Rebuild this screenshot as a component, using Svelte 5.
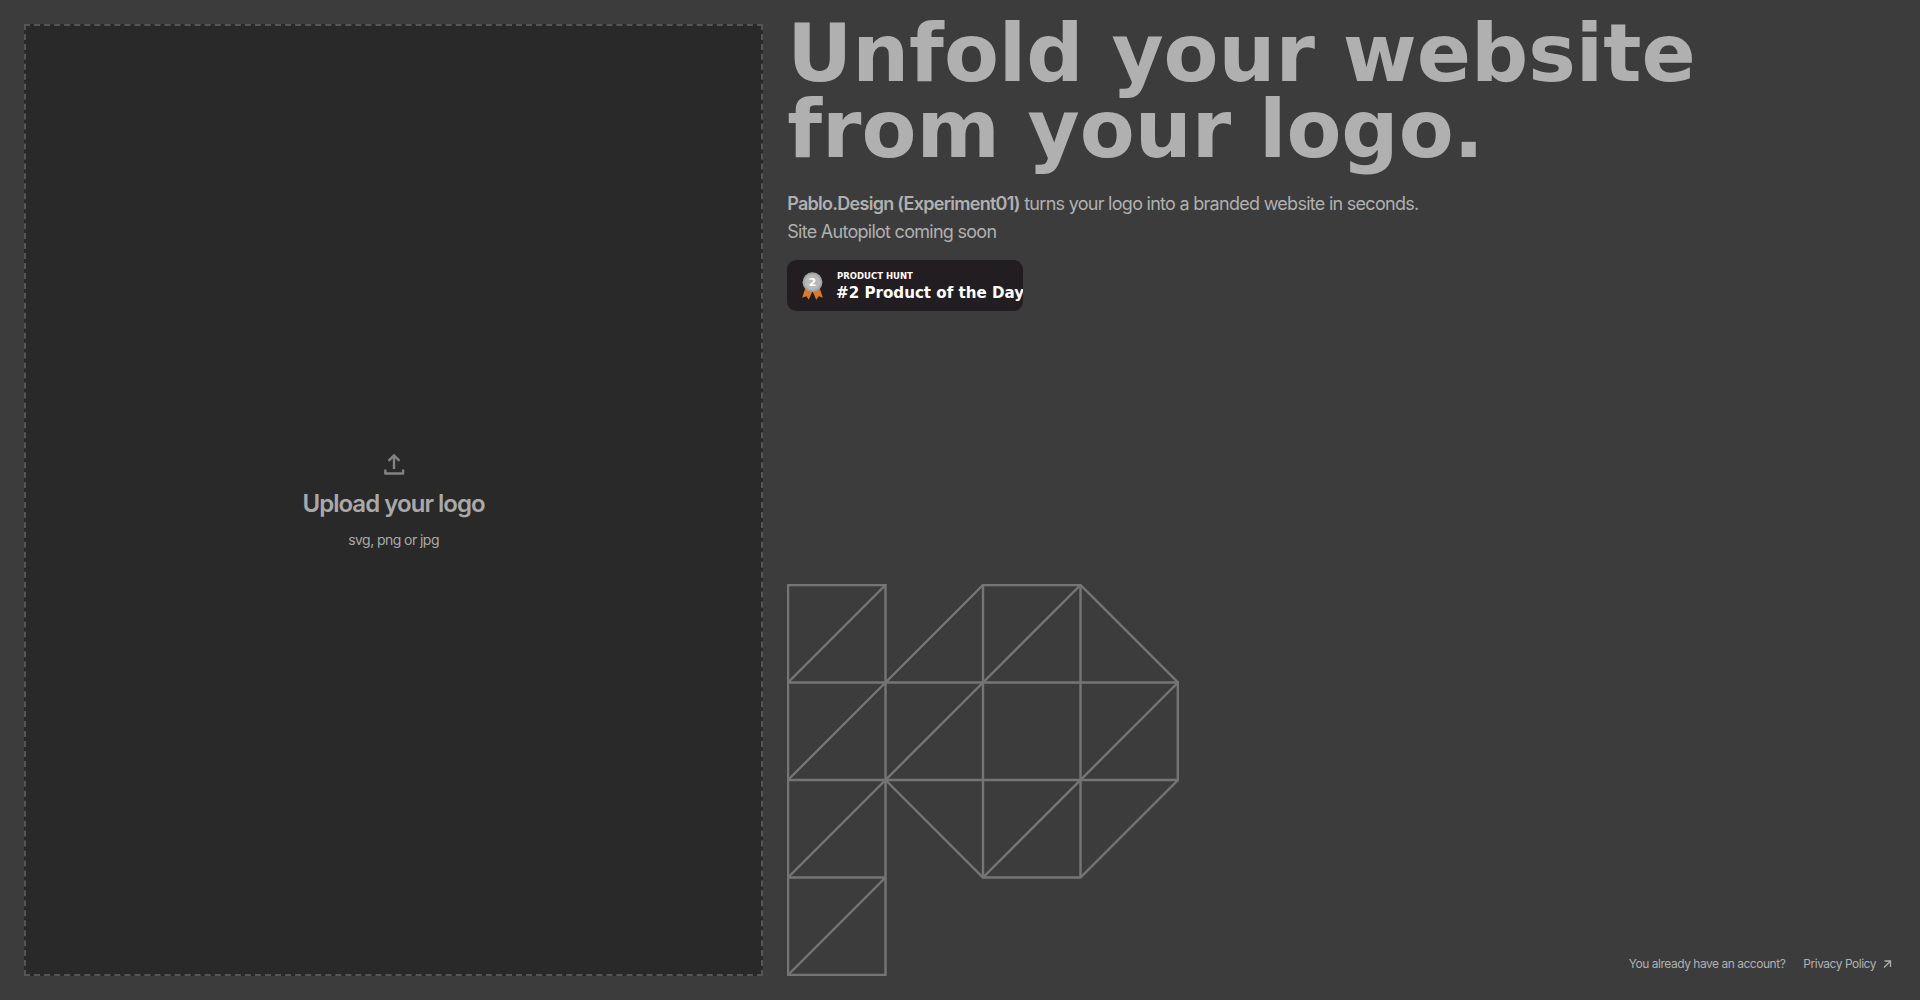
<script>
  const cells = [
    'M1 1H98.5V391H1Z',
    'M1 98.5H391V196H1',
    'M1 293.5H98.5',
    'M1 98.5L98.5 1M1 196L98.5 98.5M1 293.5L98.5 196M1 391L98.5 293.5',
    'M98.5 98.5L196 1H293.5L391 98.5V196L293.5 293.5H196L98.5 196',
    'M196 1V293.5M293.5 1V293.5',
    'M98.5 196L196 98.5L293.5 1M196 293.5L391 98.5',
  ];
</script>

<main class="page">
  <button class="upload" type="button">
    <svg class="upload-icon" viewBox="0 0 24 24" aria-hidden="true">
      <path d="M12 17V3.5M6.5 8.8L12 3.3L17.5 8.8M3.3 17.5V21.5H21.1V17.5" />
    </svg>
    <span class="upload-title">Upload your logo</span>
    <span class="upload-hint">svg, png or jpg</span>
  </button>

  <section class="intro">
    <header>
      <h1>Unfold your website<br />from your logo.</h1>
      <p class="lead">
        <strong>Pablo.Design (Experiment01)</strong> turns your logo into a branded website in seconds.<br />Site Autopilot coming soon
      </p>
      <a class="badge" href="#product-hunt" aria-label="#2 Product of the Day on Product Hunt">
        <svg viewBox="0 0 250 54">
          <rect width="250" height="54" rx="10" fill="#221d21" />
          <path d="M19 31L16 40L20.5 38.5L23 42L27 33Z M35 31L38 40L33.5 38.5L31 42L27 33Z" fill="#d9792b" />
          <circle cx="27" cy="23.5" r="10.5" fill="#a3a3a3" />
          <circle cx="27" cy="23.5" r="8.5" fill="#b8b8b8" />
          <text x="27" y="28" class="rank">2</text>
          <text x="53" y="20" class="site">PRODUCT HUNT</text>
          <text x="52" y="40" class="award">#2 Product of the Day</text>
        </svg>
      </a>
    </header>

    <div class="bottom">
      <svg class="mark" viewBox="0 0 392 392" aria-hidden="true">
        {#each cells as d}
          <path {d} />
        {/each}
      </svg>
      <nav>
        <a href="#account">You already have an account?</a>
        <a href="#privacy">
          Privacy Policy
          <svg class="arrow" viewBox="0 0 10 10" aria-hidden="true">
            <path d="M2.5 2H8.5V8M8.5 2L2 8.5" />
          </svg>
        </a>
      </nav>
    </div>
  </section>
</main>

<style>
  :global(body) {
    background: #3c3c3c;
  }

  .page {
    box-sizing: border-box;
    display: grid;
    grid-template-columns: 2fr 3fr;
    gap: 24px;
    min-height: 100vh;
    padding: 24px;
    color: #b0b0b0;
    font-family: Inter, sans-serif;
    letter-spacing: -0.04em;
  }

  .upload {
    display: flex;
    flex-direction: column;
    align-items: center;
    justify-content: center;
    padding: 4px 0 0;
    border: 2px dashed #555;
    background: #292929;
    color: #a9a9a9;
    font-family: inherit;
    cursor: pointer;
  }

  .upload-icon {
    width: 24px;
    height: 24px;
    fill: none;
    stroke: #828282;
    stroke-width: 2.4;
    stroke-linejoin: round;
  }

  .upload-title {
    margin-top: 12px;
    font-size: 24px;
    line-height: 32px;
    font-weight: 600;
    letter-spacing: -0.04em;
  }

  .upload-hint {
    margin-top: 8px;
    font-size: 14px;
    line-height: 24px;
    letter-spacing: -0.04em;
  }

  .intro {
    display: flex;
    flex-direction: column;
    justify-content: space-between;
  }

  h1 {
    margin: -8px 0 0;
    font: bold 80px/76px "DejaVu Sans", sans-serif;
    letter-spacing: normal;
  }

  .lead {
    margin: 22px 0 14px;
    font-size: 18px;
    line-height: 28px;
    letter-spacing: -0.04em;
  }

  .lead strong {
    font-weight: 600;
  }

  .badge {
    display: block;
    width: 236px;
    letter-spacing: normal;
  }

  .badge svg {
    display: block;
    width: 100%;
  }

  .badge text {
    font-family: "DejaVu Sans", sans-serif;
    font-weight: bold;
    fill: #fff;
  }

  .badge .rank {
    font-size: 12px;
    text-anchor: middle;
  }

  .badge .site {
    font-size: 9px;
  }

  .badge .award {
    font-size: 16px;
  }

  .bottom {
    display: flex;
    align-items: flex-end;
    justify-content: space-between;
  }

  .mark {
    width: 392px;
    height: 392px;
    fill: none;
    stroke: #757575;
    stroke-width: 2.4;
  }

  nav {
    display: flex;
    gap: 18px;
    padding-right: 4px;
    font-size: 12px;
    line-height: 24px;
    letter-spacing: -0.04em;
  }

  nav a {
    display: flex;
    align-items: center;
    gap: 6px;
    color: inherit;
    text-decoration: none;
  }

  .arrow {
    width: 10px;
    height: 10px;
    fill: none;
    stroke: currentColor;
    stroke-width: 1.3;
  }
</style>
